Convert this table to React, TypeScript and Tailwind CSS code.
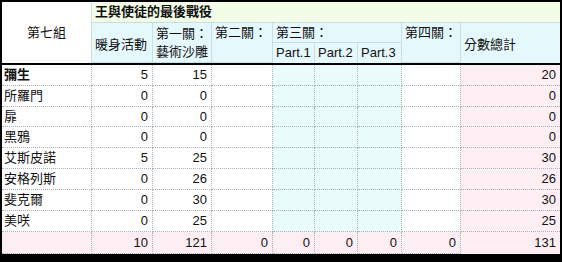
import React from "react"

/* ── Data ── */

type Row = { name: string; warm: number; stage1: number; total: number; bold?: boolean }

const rows: Row[] = [
  { name: "彌生", warm: 5, stage1: 15, total: 20, bold: true },
  { name: "所羅門", warm: 0, stage1: 0, total: 0 },
  { name: "扉", warm: 0, stage1: 0, total: 0 },
  { name: "黑鴉", warm: 0, stage1: 0, total: 0 },
  { name: "艾斯皮諾", warm: 5, stage1: 25, total: 30 },
  { name: "安格列斯", warm: 0, stage1: 26, total: 26 },
  { name: "斐克爾", warm: 0, stage1: 30, total: 30 },
  { name: "美咲", warm: 0, stage1: 25, total: 25 },
]

const cols = "grid-cols-[90px_61px_59px_61px_42px_43px_44px_59px_99px]"

const head = "border-r border-b border-[#c6dfe6] bg-[#e5f8fc] px-[3px]"
const cell = "border-r border-b border-dotted border-[#a8b3ba] flex items-center"

/* ── Body row ── */

function BodyRow({ row }: { row: Row }) {
  return (
    <>
      <div className={`${cell} bg-white pl-[2px] ${row.bold ? "font-bold" : ""}`}>{row.name}</div>
      <div className={`${cell} bg-white justify-end pr-1`}>{row.warm}</div>
      <div className={`${cell} bg-white justify-end pr-1`}>{row.stage1}</div>
      <div className={`${cell} bg-white`} />
      <div className={`${cell} bg-[#ebfcfc]`} />
      <div className={`${cell} bg-[#ebfcfc]`} />
      <div className={`${cell} bg-[#ebfcfc]`} />
      <div className={`${cell} bg-white`} />
      <div className="border-b border-dotted border-[#a8b3ba] bg-[#fdeef4] flex items-center justify-end pr-1">
        {row.total}
      </div>
    </>
  )
}

/* ── Page ── */

export default function App() {
  const totals = [10, 121, 0, 0, 0, 0, 0]

  return (
    <div
      className="w-[562px] h-[262px] bg-black pt-[2px] px-[2px] flex flex-col gap-[2px] text-[13px] text-[#111]"
      style={{ fontFamily: '"Liberation Sans", "Noto Sans CJK TC", sans-serif' }}
    >
      {/* ── Header ── */}
      <div className={`grid ${cols} grid-rows-[21px_20px_20px] leading-[18px]`}>
        <div className="row-span-3 bg-white border-r border-[#c6dfe6] flex items-center justify-center">
          第七組
        </div>
        <div className="col-span-8 border-b border-[#c6dfe6] bg-[#f3fce7] px-[3px] flex items-center font-bold">
          王與使徒的最後戰役
        </div>
        <div className={`${head} row-span-2 flex items-center pt-1`}>暖身活動</div>
        <div className={`${head} row-span-2 flex flex-col justify-center`}>
          <span>第一關：</span>
          <span>藝術沙雕</span>
        </div>
        <div className={`${head} row-span-2 pt-[1px]`}>第二關：</div>
        <div className={`${head} col-span-3 flex items-center`}>第三關：</div>
        <div className={`${head} row-span-2 pt-[1px]`}>第四關：</div>
        <div className="row-span-2 bg-[#e5f8fc] px-[3px] flex items-center pt-1">分數總計</div>
        <div className={`${head} flex items-center border-b-0`}>Part.1</div>
        <div className={`${head} flex items-center border-b-0`}>Part.2</div>
        <div className={`${head} flex items-center border-b-0`}>Part.3</div>
      </div>

      {/* ── Body ── */}
      <div className={`grid ${cols} grid-rows-[21px_21px_20px_21px_21px_21px_21px_21px_22px]`}>
        {rows.map((r) => (
          <BodyRow key={r.name} row={r} />
        ))}
        <div className={`${cell} bg-[#fdeef4]`} />
        {totals.map((t, i) => (
          <div key={i} className={`${cell} bg-[#fdeef4] justify-end pr-1`}>
            {t}
          </div>
        ))}
        <div className="bg-[#fdeef4] flex items-center justify-end pr-1">131</div>
      </div>
    </div>
  )
}
